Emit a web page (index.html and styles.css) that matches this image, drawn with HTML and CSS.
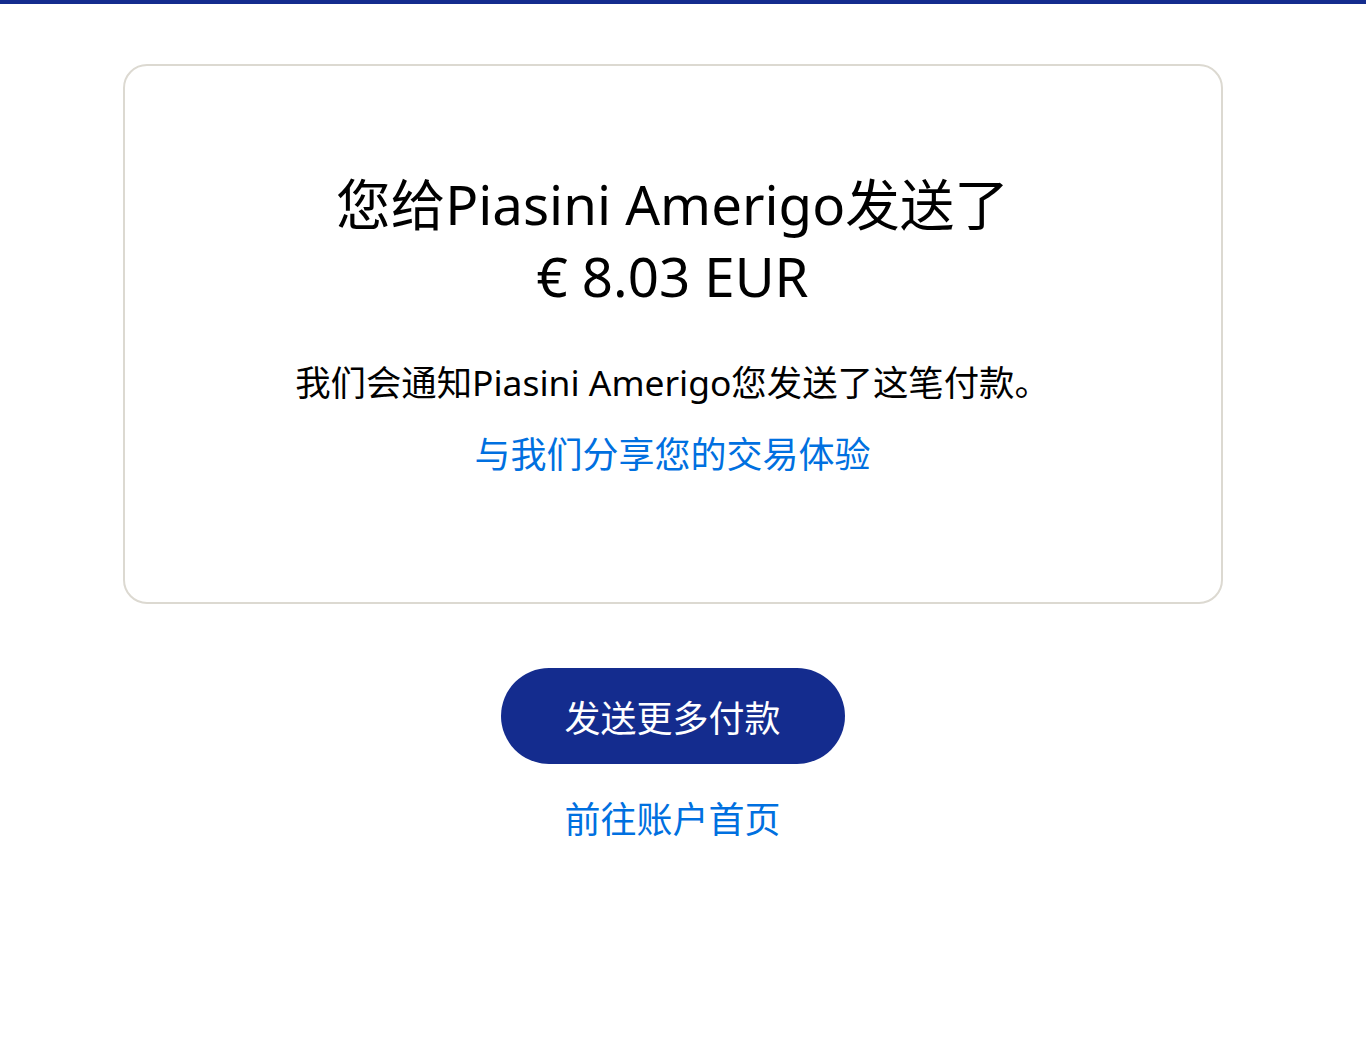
FILE: index.html
```html
<!DOCTYPE html>
<html lang="zh-CN">
<head>
<meta charset="utf-8">
<title>付款已发送</title>
<link rel="stylesheet" href="styles.css">
</head>
<body>
<div class="topbar"></div>
<main class="page">
  <section class="card">
    <h1 class="title">您给Piasini Amerigo发送了<br>€ 8.03 EUR</h1>
    <p class="note">我们会通知Piasini Amerigo您发送了这笔付款。</p>
    <a class="link" href="#">与我们分享您的交易体验</a>
  </section>
  <a class="btn" href="#">发送更多付款</a>
  <a class="link home" href="#">前往账户首页</a>
</main>
</body>
</html>
```
FILE: styles.css
```css
* { box-sizing: border-box; }
html, body { margin: 0; padding: 0; background: #fff; }
body {
  font-family: "Noto Sans", "Noto Sans CJK SC", sans-serif;
  color: #000;
}
.topbar { height: 4px; background: #142c8e; }
.page {
  display: flex;
  flex-direction: column;
  align-items: center;
  padding: 60px 21px 0 0;
}
.card {
  width: 1100px;
  border: 2px solid #dcd9d1;
  border-radius: 24px;
  padding: 102px 40px 123px;
  display: flex;
  flex-direction: column;
  align-items: center;
  text-align: center;
}
.title {
  margin: 0;
  font-size: 54.6px;
  line-height: 72px;
  font-weight: 400;
  color: #000;
}
.note {
  margin: 46px 0 0;
  font-size: 35.4px;
  line-height: 48px;
  color: #000;
}
.link {
  display: block;
  margin-top: 25px;
  font-size: 36px;
  line-height: 48px;
  color: #0070e0;
  text-decoration: none;
}
.btn {
  margin-top: 64px;
  width: 344px;
  height: 96px;
  border-radius: 48px;
  background: #142c8e;
  color: #fff;
  font-size: 36px;
  display: flex;
  align-items: center;
  justify-content: center;
  text-decoration: none;
}
.home { margin-top: 32px; }
```
